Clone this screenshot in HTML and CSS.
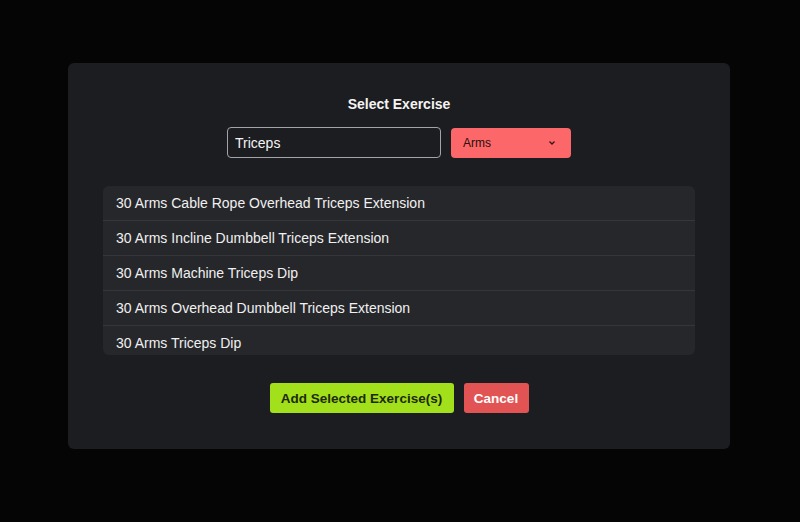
FILE: index.html
```html
<!DOCTYPE html>
<html lang="en">
<head>
    <meta charset="UTF-8">
    <meta name="viewport" content="width=device-width, initial-scale=1.0">
    <title>Select Exercise</title>
    <link rel="stylesheet" href="styles.css">
</head>
<body>
    <div class="overlay">
        <div class="modal">
            <h3>Select Exercise</h3>
            <div class="filters">
                <input type="text" class="search" value="Triceps">
                <div class="select">
                    <span>Arms</span>
                    <svg width="8" height="6" viewBox="0 0 8 6"><path d="M1.5 1.5 L4 4 L6.5 1.5" fill="none" stroke="#3a1414" stroke-width="1.3"/></svg>
                </div>
            </div>
            <ul class="exercise-list">
                <li>30 Arms Cable Rope Overhead Triceps Extension</li>
                <li>30 Arms Incline Dumbbell Triceps Extension</li>
                <li>30 Arms Machine Triceps Dip</li>
                <li>30 Arms Overhead Dumbbell Triceps Extension</li>
                <li>30 Arms Triceps Dip</li>
            </ul>
            <div class="actions">
                <button class="btn-add">Add Selected Exercise(s)</button>
                <button class="btn-cancel">Cancel</button>
            </div>
        </div>
    </div>
</body>
</html>
```

FILE: styles.css
```css
body {
    margin: 0;
    background: #050505;
    font-family: "Liberation Sans", Arial, sans-serif;
    color: #f2f2f2;
}
.overlay {
    height: 522px;
    padding-top: 63px;
    box-sizing: border-box;
}
.modal {
    width: 662px;
    height: 386px;
    margin-left: 68px;
    background: #1c1d20;
    border-radius: 6px;
    box-sizing: border-box;
    padding: 33px 35px 0;
    display: flex;
    flex-direction: column;
    align-items: center;
}
.modal h3 {
    margin: 0 0 15px;
    font-size: 14px;
    font-weight: bold;
    color: #f4f4f4;
}
.filters {
    display: flex;
    gap: 10px;
    align-items: center;
    margin-bottom: 28px;
}
.search {
    width: 214px;
    height: 31px;
    box-sizing: border-box;
    background: #1c1d20;
    border: 1px solid #a4a4a8;
    border-radius: 4px;
    color: #f4f4f4;
    font-family: "Liberation Sans", Arial, sans-serif;
    font-size: 14px;
    padding: 0 7px;
    outline: none;
}
.select {
    width: 120px;
    height: 30px;
    box-sizing: border-box;
    background: #fc6869;
    border-radius: 4px;
    display: flex;
    align-items: center;
    justify-content: space-between;
    padding: 0 15px 0 12px;
    font-size: 12px;
    color: #2a0d0d;
}
.exercise-list {
    list-style: none;
    margin: 0;
    padding: 0;
    width: 592px;
    height: 169px;
    overflow: hidden;
    border-radius: 6px;
    background: #26272b;
}
.exercise-list li {
    height: 35px;
    box-sizing: border-box;
    line-height: 34px;
    padding-left: 13px;
    font-size: 14px;
    color: #f0f0f0;
    border-bottom: 1px solid #35363a;
}
.actions {
    display: flex;
    gap: 10px;
    margin-top: 28px;
}
.actions button {
    height: 30px;
    border: none;
    border-radius: 3px;
    font-family: "Liberation Sans", Arial, sans-serif;
    font-size: 13.5px;
    font-weight: bold;
    cursor: pointer;
}
.btn-add {
    width: 184px;
    background: #a2e01b;
    color: #1d2a06;
}
.btn-cancel {
    width: 65px;
    background: #e25454;
    color: #fff;
}
```
